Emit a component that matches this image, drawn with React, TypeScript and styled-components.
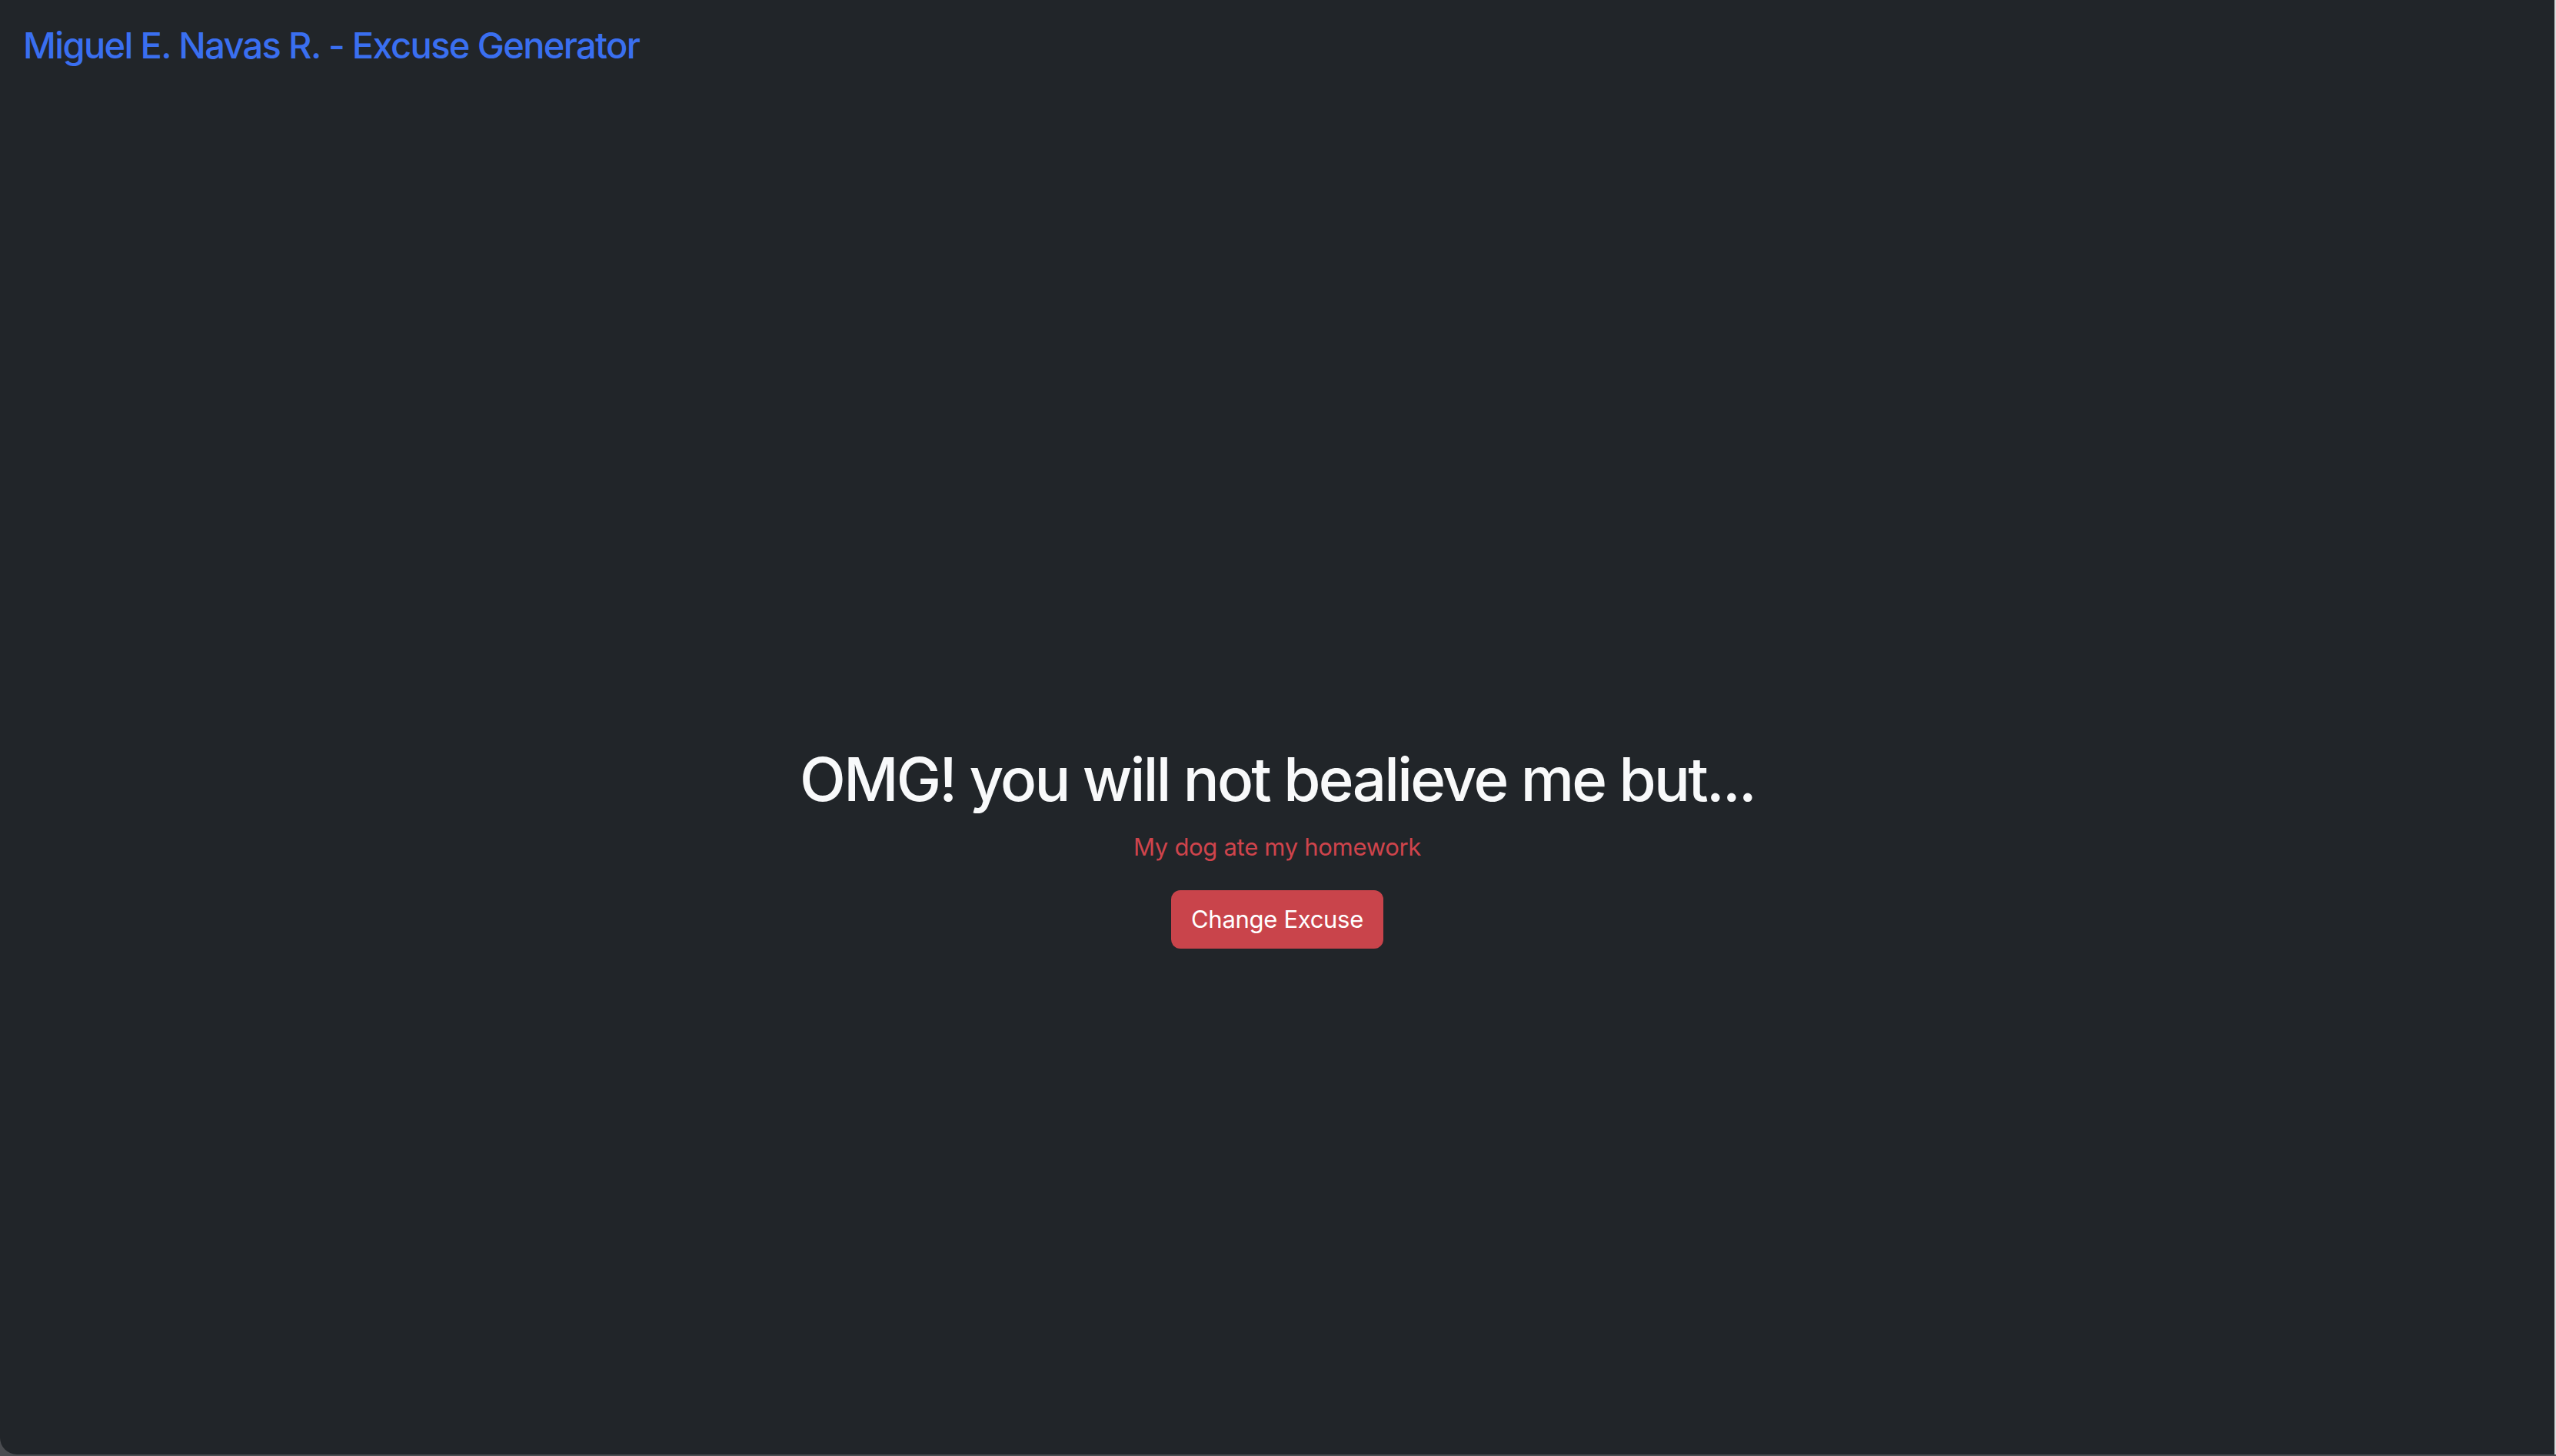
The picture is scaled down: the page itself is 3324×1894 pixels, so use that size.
import React from 'react';
import styled, { createGlobalStyle } from 'styled-components';

const GlobalStyle = createGlobalStyle`
  html, body {
    margin: 0;
    padding: 0;
    background: #4a4c50;
  }
  #root {
    height: 1894px;
  }
`;

const Frame = styled.div`
  box-sizing: border-box;
  height: 1892px;
  width: 100%;
  background: #212529;
  border-right: 2px solid #dadbdc;
  border-bottom-left-radius: 22px;
  font-family: Inter, 'Noto Sans', 'Liberation Sans', sans-serif;
  display: flex;
  flex-direction: column;
`;

const Header = styled.header`
  padding: 31px 30px 28px;
`;

const Brand = styled.a`
  font-size: 47px;
  font-weight: 500;
  line-height: 1.2;
  color: #3a6ff0;
  text-decoration: none;
  letter-spacing: -1.65px;
`;

const Main = styled.main`
  padding-top: 851px;
  display: flex;
  flex-direction: column;
  align-items: center;
`;

const Heading = styled.h1`
  margin: 0 0 16px;
  font-size: 78px;
  font-weight: 500;
  line-height: 96px;
  color: #f8f9fa;
  letter-spacing: -2.7px;
`;

const Excuse = styled.p`
  margin: 0 0 32px;
  font-size: 31px;
  line-height: 48px;
  color: #cf444c;
  letter-spacing: -0.3px;
`;

const Button = styled.button`
  box-sizing: border-box;
  height: 76px;
  padding: 12px 24px;
  border: 2px solid #c9444b;
  border-radius: 12px;
  background: #c9444b;
  color: #ffffff;
  font-family: inherit;
  font-size: 31px;
  line-height: 48px;
  letter-spacing: -0.3px;
  cursor: pointer;
`;

const excuses = ['My dog ate my homework'];

export default function App(): React.ReactElement {
  const [excuse, setExcuse] = React.useState(excuses[0]);
  return (
    <>
      <GlobalStyle />
      <Frame>
        <Header>
          <Brand href="#">Miguel E. Navas R. - Excuse Generator</Brand>
        </Header>
        <Main>
          <Heading>OMG! you will not bealieve me but...</Heading>
          <Excuse>{excuse}</Excuse>
          <Button onClick={() => setExcuse(excuses[Math.floor(Math.random() * excuses.length)])}>
            Change Excuse
          </Button>
        </Main>
      </Frame>
    </>
  );
}
